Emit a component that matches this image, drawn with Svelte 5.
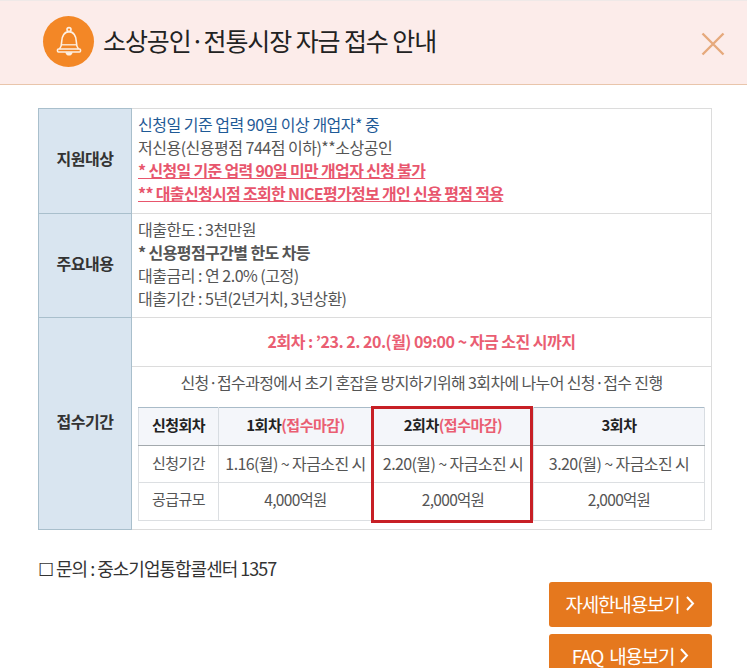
<script>
  const rounds = [
    { name: '1회차', closed: true, period: '1.16(월) ~ 자금소진 시', supply: '4,000억원' },
    { name: '2회차', closed: true, period: '2.20(월) ~ 자금소진 시', supply: '2,000억원' },
    { name: '3회차', closed: false, period: '3.20(월) ~ 자금소진 시', supply: '2,000억원' }
  ];
</script>

<div class="page">
  <header class="head">
    <span class="badge">
      <svg width="32" height="32" viewBox="0 0 32 32" fill="none" stroke="#fdf0e4" stroke-width="1.6">
        <circle cx="16" cy="3.6" r="2" />
        <path d="M6.500 23c1.800-2.200 2.200-4 2.200-7.500 0-5.500 3-9.900 7.300-9.900s7.300 4.400 7.300 9.900c0 3.500.4 5.300 2.200 7.500" />
        <path d="M8.500 18.800h15" stroke-width="1.300" />
        <rect x="4.500" y="23" width="23" height="3" rx="1" />
        <path d="M12.400 26.200c.3 2.400 1.700 3.400 3.600 3.400s3.300-1 3.600-3.400z" fill="#fdf0e4" stroke="none" />
      </svg>
    </span>
    <h1>소상공인·전통시장 자금 접수 안내</h1>
    <svg class="close" width="24" height="24" viewBox="0 0 24 24" stroke="#e6a97c" stroke-width="2.400" fill="none">
      <path d="M1.500 1.500l21 21M22.500 1.500l-21 21" />
    </svg>
  </header>

  <main class="body">
    <table class="info">
      <tbody>
        <tr class="r1">
          <th>지원대상</th>
          <td class="txt">
            <p class="blue">신청일 기준 업력 90일 이상 개업자* 중</p>
            <p>저신용(신용평점 744점 이하)**소상공인</p>
            <p class="warn">* 신청일 기준 업력 90일 미만 개업자 신청 불가</p>
            <p class="warn">** 대출신청시점 조회한 NICE평가정보 개인 신용 평점 적용</p>
          </td>
        </tr>
        <tr class="r2">
          <th>주요내용</th>
          <td class="txt">
            <p>대출한도 : 3천만원</p>
            <p class="strong">* 신용평점구간별 한도 차등</p>
            <p>대출금리 : 연 2.0% (고정)</p>
            <p>대출기간 : 5년(2년거치, 3년상환)</p>
          </td>
        </tr>
        <tr>
          <th>접수기간</th>
          <td class="period">
            <div class="notice">2회차 : ’23. 2. 20.(월) 09:00 ~ 자금 소진 시까지</div>
            <div class="sub">
              <p class="lead">신청·접수과정에서 초기 혼잡을 방지하기위해 3회차에 나누어 신청·접수 진행</p>
              <div class="wrap">
                <table class="rounds">
                  <thead>
                    <tr>
                      <th class="c0">신청회차</th>
                      {#each rounds as r}
                        <th>{r.name}{#if r.closed}<span class="closed">(접수마감)</span>{/if}</th>
                      {/each}
                    </tr>
                  </thead>
                  <tbody>
                    <tr class="mid">
                      <td class="label">신청기간</td>
                      {#each rounds as r}<td>{r.period}</td>{/each}
                    </tr>
                    <tr class="low">
                      <td class="label">공급규모</td>
                      {#each rounds as r}<td>{r.supply}</td>{/each}
                    </tr>
                  </tbody>
                </table>
                <div class="mark"></div>
              </div>
            </div>
          </td>
        </tr>
      </tbody>
    </table>

    <p class="contact">☐ 문의 : 중소기업통합콜센터 1357</p>

    <div class="actions">
      <button>자세한내용보기
        <svg width="9" height="15" viewBox="0 0 9 15" fill="none" stroke="#fff" stroke-width="2"><path d="M1 1l6 6.500-6 6.500" /></svg>
      </button>
      <button class="faq">FAQ 내용보기
        <svg width="9" height="15" viewBox="0 0 9 15" fill="none" stroke="#fff" stroke-width="2"><path d="M1 1l6 6.500-6 6.500" /></svg>
      </button>
    </div>
  </main>
</div>

<style>
  :global(body) {
    margin: 0;
    background: #fff;
  }
  .page {
    width: 747px;
    height: 668px;
    overflow: hidden;
    font-family: "Noto Sans CJK KR", "Noto Sans", sans-serif;
    color: #555;
    font-size: 16px;
    letter-spacing: -0.5px;
  }
  .head {
    box-sizing: border-box;
    background: #fcecea;
    border-top: 1px solid #efe9e8;
    border-bottom: 1px solid #e9c5ab;
    height: 85px;
    display: flex;
    align-items: center;
    padding: 0 22px 2px 43px;
  }
  .badge {
    width: 51px;
    height: 51px;
    border-radius: 50%;
    background: #f38726;
    display: flex;
    align-items: center;
    justify-content: center;
    flex: none;
  }
  h1 {
    margin: 0 0 4px 9px;
    flex: 1;
    font-size: 25px;
    font-weight: 400;
    color: #222;
    letter-spacing: -1.100px;
    line-height: 34px;
  }
  .close {
    flex: none;
    margin-top: 4px;
  }
  .body {
    padding: 23px 35px 0 38px;
  }
  p {
    margin: 0;
  }
  .info {
    width: 674px;
    border-collapse: collapse;
    table-layout: fixed;
    border-top: 1px solid #a9bfcc;
  }
  .info > tbody > tr > th {
    width: 92px;
    background: #d9e5f0;
    border: 1px solid #a9bfcc;
    border-top: 0;
    color: #333;
    font-size: 16px;
    font-weight: 700;
    padding: 0 0 6px;
  }
  .info > tbody > tr > td {
    border: 1px solid #dcdcdc;
    border-left: 1px solid #a9bfcc;
    padding: 0;
  }
  .txt {
    padding: 3px 6px 7px !important;
    line-height: 23px;
  }
  .r1 {
    height: 105px;
  }
  .r2 {
    height: 104px;
  }
  .blue {
    color: #1f5a96;
  }
  .warn {
    color: #e8566d;
    font-weight: 700;
    letter-spacing: -0.68px;
    text-decoration: underline;
  }
  .strong {
    font-weight: 700;
    letter-spacing: -0.6px;
  }
  .notice {
    height: 48px;
    line-height: 46px;
    text-align: center;
    color: #ea5e72;
    font-weight: 700;
    font-size: 16px;
    border-bottom: 1px solid #dcdcdc;
  }
  .sub {
    padding: 0 6px 8px;
  }
  .lead {
    height: 40px;
    line-height: 31px;
    text-align: center;
    letter-spacing: -0.64px;
  }
  .wrap {
    position: relative;
  }
  .rounds {
    width: 100%;
    border-collapse: collapse;
    table-layout: fixed;
    text-align: center;
    line-height: 20px;
    font-size: 16px;
    letter-spacing: -0.6px;
  }
  .rounds th {
    height: 38px;
    padding: 0 0 3px;
    box-sizing: border-box;
    background: #f4f6fa;
    border: 1px solid #d8dde2;
    border-top: 1px solid #a9bbc8;
    border-bottom: 1px solid #a3a9ad;
    color: #222;
    font-size: 15px;
    letter-spacing: -0.5px;
  }
  .rounds td {
    padding: 0;
    box-sizing: border-box;
    border: 1px solid #dcdfe2;
  }
  .rounds .c0 {
    width: 80px;
  }
  .rounds th:nth-child(2) {
    width: 154px;
  }
  .rounds th:nth-child(3) {
    width: 161px;
  }
  .mid td {
    height: 37px;
    padding-bottom: 2px;
  }
  .low td {
    height: 38px;
    padding-bottom: 5px;
    font-size: 15.500px;
    letter-spacing: -0.7px;
  }
  .rounds .label {
    font-size: 15px;
    letter-spacing: -0.6px;
  }
  .closed {
    color: #ea5e72;
  }
  .mark {
    position: absolute;
    left: 233px;
    top: -1px;
    width: 162px;
    height: 117px;
    box-sizing: border-box;
    border: 3px solid #c71f25;
  }
  .contact {
    margin-top: 26px;
    font-size: 18px;
    line-height: 24px;
    color: #333;
    letter-spacing: -1px;
  }
  .actions {
    display: flex;
    flex-direction: column;
    align-items: flex-end;
    gap: 7px;
    margin-top: 2px;
  }
  button {
    width: 163px;
    height: 45px;
    padding: 0 0 2px;
    border: 0;
    border-radius: 3px;
    background: #e5781e;
    color: #fff;
    font: inherit;
    font-size: 19px;
    letter-spacing: -1.200px;
    display: flex;
    align-items: center;
    justify-content: center;
    gap: 7px;
  }
  .faq {
    word-spacing: 3px;
    gap: 6px;
  }
</style>
